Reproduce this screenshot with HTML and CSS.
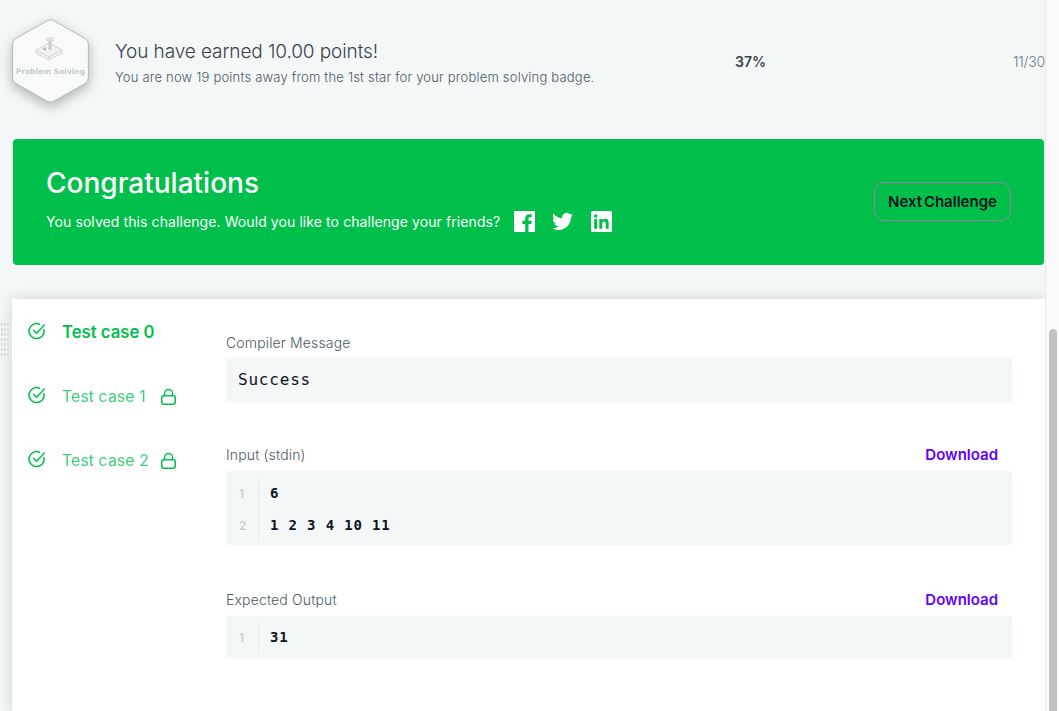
FILE: index.html
```html
<!DOCTYPE html>
<html lang="en">
<head>
<meta charset="utf-8">
<title>Congratulations</title>
<link rel="stylesheet" href="styles.css">
</head>
<body>
<div class="shell">
  <main class="page">
    <section class="earned">
      <svg class="badge" width="77" height="84" viewBox="0 0 77 84">
        <path d="M38.5 .8 Q40 .8 41.5 1.600 L73 19.500 Q76.400 21.500 76.400 25 L76.400 59 Q76.400 62.500 73 64.500 L41.500 82.400 Q38.500 84 35.500 82.400 L4 64.500 Q.6 62.500 .6 59 L.6 25 Q.6 21.500 4 19.500 L35.500 1.600 Q37 .8 38.500 .8 Z" fill="#f7f9fa" stroke="#b4b8ba" stroke-width="1"/>
        <g fill="none" stroke="#d2d6d8" stroke-width="1">
          <path d="M24 31 L37 24 L50 31 L50 34 L37 41 L24 34 Z" fill="#f1f3f4"/>
          <path d="M24 31 L37 38 L50 31 M37 38 L37 41"/>
          <path d="M38 22 L38 31" stroke="#c8cccf" stroke-width="3"/>
          <path d="M35 22 L35 19 L41 19 L41 22 Z" fill="#e4e6e8"/>
          <path d="M30 30 L34 28 L34 32 Z" fill="#b5babd" stroke="none"/>
        </g>
        <text class="badge-label" x="38.500" y="55" text-anchor="middle">Problem Solving</text>
      </svg>
      <div class="earned-text">
        <h2 class="earned-title">You have earned 10.00 points!</h2>
        <p class="earned-sub">You are now 19 points away from the 1st star for your problem solving badge.</p>
      </div>
      <div class="progress">
        <span class="percent">37%</span>
        <span class="count">11/30</span>
      </div>
    </section>

    <section class="banner">
      <div class="banner-text">
        <h1 class="banner-title">Congratulations</h1>
        <div class="banner-row">
          <span>You solved this challenge. Would you like to challenge your friends?</span>
          <svg class="social" width="21" height="21" viewBox="0 0 21 21"><path fill="#fff" fill-rule="evenodd" d="M1 0h19a1 1 0 0 1 1 1v19a1 1 0 0 1-1 1h-5.500v-8h2.800l.4-3.200h-3.200V7.800c0-1 .3-1.600 1.600-1.600h1.700V3.300c-.3 0-1.300-.1-2.500-.1-2.500 0-4.100 1.500-4.100 4.200v2.400H8.300V13h2.900v8H1a1 1 0 0 1-1-1V1a1 1 0 0 1 1-1z"/></svg>
          <svg class="social" width="21" height="21" viewBox="0 0 24 24"><path fill="#fff" d="M23.950 4.570a10 10 0 0 1-2.820.77 4.960 4.960 0 0 0 2.160-2.720c-.95.550-2 .96-3.130 1.190a4.920 4.920 0 0 0-8.380 4.480C7.690 8.100 4.070 6.130 1.640 3.160a4.820 4.820 0 0 0-.67 2.480c0 1.710.87 3.210 2.190 4.100a4.900 4.900 0 0 1-2.230-.62v.06a4.920 4.920 0 0 0 3.950 4.830 5 5 0 0 1-2.210.08 4.940 4.940 0 0 0 4.600 3.420A9.870 9.870 0 0 1 0 19.540a14 14 0 0 0 7.560 2.210c9.050 0 14-7.500 14-13.980 0-.21 0-.42-.02-.63a9.940 9.940 0 0 0 2.460-2.550z"/></svg>
          <svg class="social" width="21" height="21" viewBox="0 0 21 21"><path fill="#fff" fill-rule="evenodd" d="M1.500 0h18A1.500 1.500 0 0 1 21 1.500v18a1.500 1.500 0 0 1-1.500 1.500h-18A1.500 1.500 0 0 1 0 19.500v-18A1.500 1.500 0 0 1 1.500 0zM3.200 8v9.800h3V8zM4.700 3.200a1.750 1.750 0 1 0 0 3.500 1.750 1.750 0 0 0 0-3.500zM8.300 8v9.800h3v-4.900c0-1.300.3-2.500 1.800-2.500s1.600 1.400 1.600 2.600v4.800h3v-5.400c0-2.700-.6-4.600-3.700-4.600-1.500 0-2.400.8-2.800 1.500V8z"/></svg>
        </div>
      </div>
      <a class="next-btn" href="#">Next Challenge</a>
    </section>

    <div class="panel-wrap">
      <div class="grip"></div>
      <section class="panel">
        <nav class="cases">
          <div class="case case-active">
            <svg class="check" width="18" height="18" viewBox="0 0 18 18"><path d="M15.900 7.700A7.500 7.500 0 1 1 11.500 2.200" fill="none" stroke="currentColor" stroke-width="1.500" stroke-linecap="round"/><path d="M5.500 8.200 8.700 11.200 16.300 3" fill="none" stroke="currentColor" stroke-width="1.500" stroke-linecap="round" stroke-linejoin="round"/></svg>
            <span class="case-name-active">Test case 0</span>
          </div>
          <div class="case">
            <svg class="check" width="18" height="18" viewBox="0 0 18 18"><path d="M15.900 7.700A7.500 7.500 0 1 1 11.500 2.200" fill="none" stroke="currentColor" stroke-width="1.500" stroke-linecap="round"/><path d="M5.500 8.200 8.700 11.200 16.300 3" fill="none" stroke="currentColor" stroke-width="1.500" stroke-linecap="round" stroke-linejoin="round"/></svg>
            <span class="case-name">Test case 1</span>
            <svg class="lock" width="15" height="16" viewBox="0 0 15 16"><rect x=".75" y="6.750" width="13.500" height="8.500" rx="2" fill="none" stroke="currentColor" stroke-width="1.500"/><path d="M3.500 6.500V4.500a4 4 0 0 1 8 0v2" fill="none" stroke="currentColor" stroke-width="1.500"/></svg>
          </div>
          <div class="case">
            <svg class="check" width="18" height="18" viewBox="0 0 18 18"><path d="M15.900 7.700A7.500 7.500 0 1 1 11.500 2.200" fill="none" stroke="currentColor" stroke-width="1.500" stroke-linecap="round"/><path d="M5.500 8.200 8.700 11.200 16.300 3" fill="none" stroke="currentColor" stroke-width="1.500" stroke-linecap="round" stroke-linejoin="round"/></svg>
            <span class="case-name">Test case 2</span>
            <svg class="lock" width="15" height="16" viewBox="0 0 15 16"><rect x=".75" y="6.750" width="13.500" height="8.500" rx="2" fill="none" stroke="currentColor" stroke-width="1.500"/><path d="M3.500 6.500V4.500a4 4 0 0 1 8 0v2" fill="none" stroke="currentColor" stroke-width="1.500"/></svg>
          </div>
        </nav>
        <div class="results">
          <div class="block block-compiler">
            <div class="block-head"><span>Compiler Message</span></div>
            <div class="message">Success</div>
          </div>
          <div class="block block-input">
            <div class="block-head"><span>Input (stdin)</span><a class="download" href="#">Download</a></div>
            <div class="code code-input">
              <div class="line"><span class="num">1</span><span class="src">6</span></div>
              <div class="line"><span class="num">2</span><span class="src">1 2 3 4 10 11</span></div>
            </div>
          </div>
          <div class="block">
            <div class="block-head"><span>Expected Output</span><a class="download" href="#">Download</a></div>
            <div class="code code-single">
              <div class="line"><span class="num">1</span><span class="src">31</span></div>
            </div>
          </div>
        </div>
      </section>
    </div>
  </main>
  <aside class="scrollbar"><div class="thumb"></div></aside>
</div>
</body>
</html>
```
FILE: styles.css
```css
* { box-sizing: border-box; }
html, body { margin: 0; height: 100%; overflow: hidden; }
body { background: #f3f7f7; font-family: "Inter", "Liberation Sans", sans-serif; color: #39424e; }
a { text-decoration: none; }
h1, h2, p { margin: 0; font-weight: 400; }

.shell { display: flex; height: 711px; }
.page { width: 1045px; flex: none; overflow: hidden; }
.scrollbar { width: 14px; flex: none; background: #fafafa; border-left: 1px solid #e8e8e8; padding: 329px 2px 0 3px; }
.thumb { height: 400px; background: #c1c1c1; border-radius: 4px 4px 0 0; }

.earned { display: flex; align-items: center; height: 139px; padding: 0 0 18px 12px; }
.badge { flex: none; filter: drop-shadow(0 4px 6px rgba(0,0,0,.28)); overflow: visible; }
.badge-label { font-family: "DejaVu Sans", sans-serif; font-size: 7.500px; font-weight: 700; fill: #c2c7ca; }
.earned-text { margin-left: 26px; width: 620px; margin-top: 3px; }
.earned-title { font-size: 19px; font-weight: 300; line-height: 26px; letter-spacing: -.1px; color: #39424e; }
.earned-sub { font-size: 13px; font-weight: 300; line-height: 18px; margin-top: 3px; letter-spacing: .2px; color: #4b5a66; }
.progress { flex: 1; display: flex; justify-content: space-between; font-size: 14px; margin-top: 2px; }
.percent { font-weight: 600; }
.count { color: #6f7b86; font-weight: 300; letter-spacing: -.2px; }

.banner { display: flex; justify-content: space-between; align-items: center; height: 126px; margin-left: 13px; margin-right: 1px; padding: 0 33px; background: #00c04b; border-radius: 4px; color: #fff; }
.banner-text { margin-top: -6px; }
.banner-title { font-size: 28px; font-weight: 500; line-height: 34px; }
.banner-row { display: flex; align-items: center; gap: 14px; margin-top: 11px; font-size: 14px; letter-spacing: .09px; }
.social { flex: none; }
.social + .social { margin-left: 3px; }
.social:last-child { margin-left: 4px; }
.next-btn { width: 137px; height: 39px; margin-top: -1px; display: flex; align-items: center; justify-content: center; border: 1px solid #9a7fa6; border-radius: 10px; color: #0e141e; font-size: 15px; font-weight: 600; word-spacing: -2px; }

.panel-wrap { position: relative; margin-top: 34px; }
.grip { position: absolute; left: 1px; top: 24px; width: 8px; height: 34px; background: repeating-linear-gradient(to right, transparent 0 2px, #f3f7f7 2px 3px), repeating-linear-gradient(to bottom, #d9dcde 0 3px, transparent 3px 5px); }
.panel { display: flex; margin-left: 12px; min-height: 420px; background: #fff; box-shadow: 0 0 14px rgba(0,0,0,.14); }
.cases { width: 214px; flex: none; padding: 23px 0 0 16px; }
.case { display: flex; align-items: center; height: 20px; margin-bottom: 44px; color: #00c04b; font-size: 16px; }
.case-name-active { font-weight: 600; font-size: 16.700px; }
.case-name { opacity: .75; width: 83px; font-weight: 400; white-space: nowrap; }
.check { flex: none; margin-right: 16px; margin-top: -3px; }
.lock { flex: none; margin-left: 16px; margin-top: 2px; }

.results { width: 786px; flex: none; padding-top: 35px; }
.block-head { display: flex; justify-content: space-between; height: 16px; padding-right: 14px; align-items: center; font-size: 14px; font-weight: 300; letter-spacing: .15px; color: #4a5a68; }
.download { color: #6200ff; font-weight: 600; font-size: 15px; letter-spacing: 0; }
.message { margin-top: 8px; height: 44px; line-height: 44px; padding-left: 12px; background: #f3f7f7; font-family: "DejaVu Sans Mono", monospace; font-size: 16px; letter-spacing: .8px; color: #0e141e; }
.block-compiler { margin-bottom: 44px; }
.block-input { margin-bottom: 46px; }
.code { background: #f3f7f7; }
.code-input { margin-top: 9px; padding: 6px 0 4px; }
.code-single { margin-top: 9px; padding: 5px 0; }
.line { display: flex; height: 32px; align-items: center; }
.num { width: 33px; flex: none; margin-right: 11px; padding-left: 13px; font-size: 12px; font-weight: 500; color: #c0ccd0; border-right: 1px solid #e6ebeb; height: 100%; display: flex; align-items: center; }
.src { font-family: "DejaVu Sans Mono", monospace; font-weight: 700; font-size: 14px; letter-spacing: .85px; color: #0e141e; }
```
